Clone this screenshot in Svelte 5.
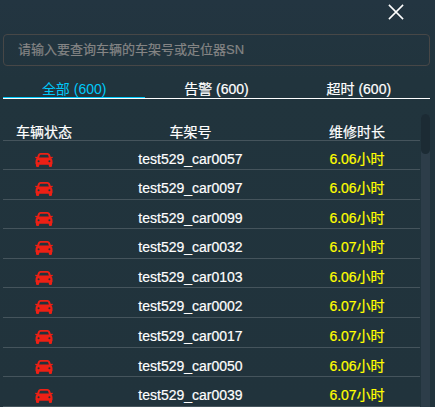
<script>
  const tabs = ['全部 (600)', '告警 (600)', '超时 (600)'];
  let active = $state(0);
  const rows = [
    ['test529_car0057', '6.06'],
    ['test529_car0097', '6.06'],
    ['test529_car0099', '6.06'],
    ['test529_car0032', '6.07'],
    ['test529_car0103', '6.06'],
    ['test529_car0002', '6.07'],
    ['test529_car0017', '6.07'],
    ['test529_car0050', '6.06'],
    ['test529_car0039', '6.07']
  ];
</script>

<div class="panel">
  <div class="top">
    <button class="close" aria-label="关闭">
      <svg width="16" height="16" viewBox="0 0 16 16"><path d="M.9.900 15.100 15.100M15.100.900.900 15.100" stroke="#fff" stroke-width="1.5" fill="none" /></svg>
    </button>
  </div>
  <input class="search" placeholder="请输入要查询车辆的车架号或定位器SN" />
  <div class="tabs">
    {#each tabs as tab, i}
      <button class="tab" class:active={active === i} onclick={() => (active = i)}>{tab}</button>
    {/each}
  </div>
  <div class="body">
    <div class="table">
      <div class="row head">
        <span class="status">车辆状态</span>
        <span class="frame">车架号</span>
        <span class="time">维修时长</span>
      </div>
      {#each rows as [name, hours]}
        <div class="row">
          <span class="status">
            <svg class="car" width="18" height="14" viewBox="0 0 18 14" fill="#ed2015" fill-rule="evenodd">
              <path d="M5.5 0h7q1.8 0 2.400 1.600l.9 2.500 1.700-.3q.8 1-.5 1.500l-.7.3q1.200.9 1.200 2.600v3.100H17V13q0 1-1.300 1h-.7q-1.200 0-1.200-1v-1.200H4.200V13q0 1-1.200 1h-.7Q1 14 1 13v-1.700H.5V8.200q0-1.700 1.200-2.600L1 5.300Q-.3 4.800.5 3.800l1.700.3.900-2.500Q3.700 0 5.500 0zM5.700 1.800q-.7 0-.9.600l-.7 2.200h9.800l-.7-2.200q-.2-.6-.9-.6zM3.600 7.200a1 1 0 1 0 0 2 1 1 0 0 0 0-2zM14.400 7.200a1 1 0 1 0 0 2 1 1 0 0 0 0-2z" />
            </svg>
          </span>
          <span class="frame">{name}</span>
          <span class="time hours">{hours}小时</span>
        </div>
      {/each}
    </div>
    <div class="track"><div class="thumb"></div></div>
  </div>
</div>

<style>
  :global(body) {
    background: #21333c;
    overflow: hidden;
  }
  .panel {
    box-sizing: border-box;
    height: 407px;
    padding: 0 5px 0 3px;
    overflow: hidden;
    display: flex;
    flex-direction: column;
    background: linear-gradient(#233541, #21343d 80px, #21333c);
    color: #fff;
    font: 14px/20px 'Liberation Sans', 'Noto Sans CJK SC', sans-serif;
    -webkit-text-stroke: 0.2px;
  }
  button {
    border: 0;
    padding: 0;
    background: none;
    color: inherit;
    font: inherit;
  }
  .top {
    flex: none;
    height: 34px;
    display: flex;
    justify-content: flex-end;
    align-items: flex-start;
    padding: 4px 26px 0 0;
    box-sizing: border-box;
  }
  .close, .close svg, .car {
    display: block;
  }
  .car {
    margin-top: 2px;
  }
  .search {
    flex: none;
    box-sizing: border-box;
    width: 427px;
    height: 32px;
    margin: 0;
    padding: 0 14px 2px;
    border: 1px solid #474747;
    border-radius: 4px;
    outline: 0;
    background: transparent;
    color: #fff;
    font: 13px 'Liberation Sans', 'Noto Sans CJK SC', sans-serif;
  }
  .search::placeholder {
    color: #858585;
    opacity: 1;
  }
  .tabs {
    flex: none;
    display: flex;
    height: 33px;
    box-sizing: border-box;
    padding-top: 13px;
    border-bottom: 1px solid #fff;
  }
  .tab {
    flex: 1;
    box-sizing: border-box;
    border-bottom: 1px solid transparent;
    -webkit-text-stroke: 0.2px;
  }
  .tab.active {
    color: #00c8fa;
    border-color: #00c8fa;
    -webkit-text-stroke: 0;
  }
  .body {
    flex: none;
    display: flex;
    gap: 1px;
    padding-top: 15px;
  }
  .table {
    width: 417px;
  }
  .row {
    display: flex;
    align-items: center;
    box-sizing: border-box;
    height: 29.59px;
    border-bottom: 1px solid #45545c;
    padding-top: 7.4px;
  }
  .row.head {
    height: 26.6px;
    padding-top: 10px;
  }
  .row span {
    display: flex;
    justify-content: center;
  }
  .status {
    width: 82px;
  }
  .frame {
    width: 211px;
  }
  .time {
    width: 122px;
  }
  .hours {
    color: #ff0;
  }
  .track {
    width: 9px;
    height: 293px;
    border-radius: 5px 5px 0 0;
    background: #2d3d49;
  }
  .thumb {
    height: 40px;
    border-radius: 5px;
    background: #1c2b34;
  }
</style>
